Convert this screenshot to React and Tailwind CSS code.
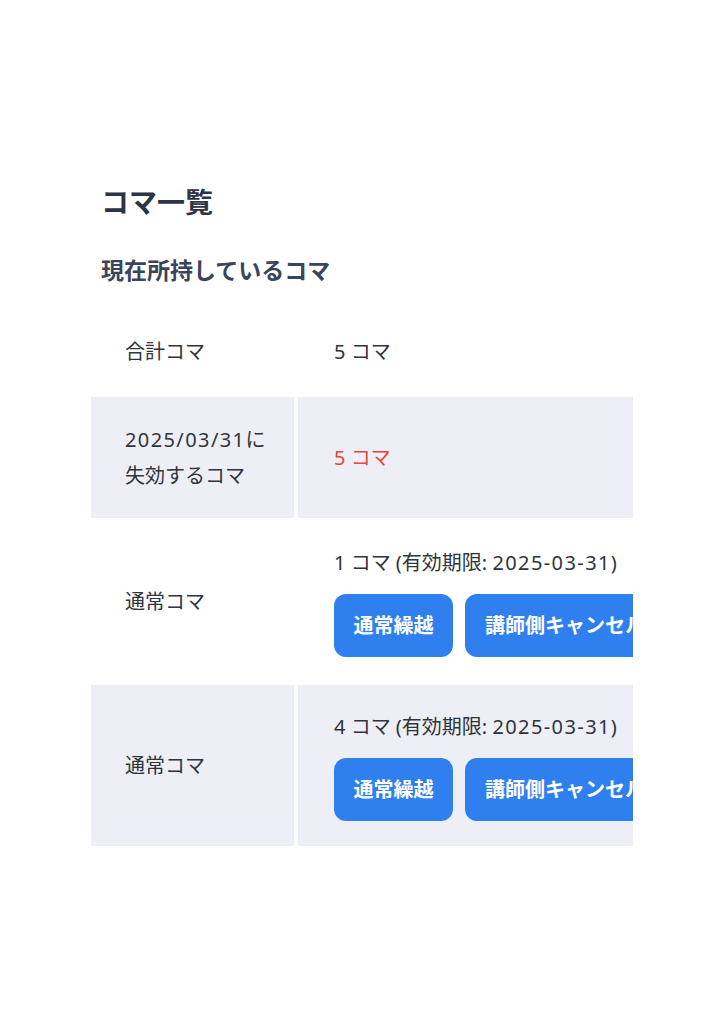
export default function App() {
  const font = { fontFamily: '"Noto Sans", "Noto Sans CJK JP", sans-serif' };
  const Num = ({ children }) => <span className="tracking-[1.4px]">{children}</span>;
  const Btns = () => (
    <div className="flex gap-[12px] mt-[13px] whitespace-nowrap">
      <button className="h-[63px] px-[19.5px] rounded-[12px] bg-[#2f7fef] text-white text-[20px] font-bold shrink-0">通常繰越</button>
      <button className="h-[63px] px-[20px] rounded-[12px] bg-[#2f7fef] text-white text-[20px] font-bold shrink-0">講師側キャンセル繰越</button>
    </div>
  );
  return (
    <div className="min-h-[1024px] bg-white text-[#30343c]" style={font}>
      <div className="pt-[182px] pl-[91px]">
        <h1 className="pl-[10px] text-[28px] font-bold text-[#2d3444] leading-[40px]">コマ一覧</h1>
        <h2 className="pl-[10px] mt-[32px] text-[23px] font-bold text-[#3a455c] leading-[32px]">現在所持しているコマ</h2>
        <div className="mt-[24px] w-[542px] overflow-hidden">
          <div className="grid grid-cols-[203px_1fr] gap-x-[4px] gap-y-[3px] w-[700px] text-[20px] leading-[36px]">
            <div className="pl-[34px] py-[24px] flex items-center">合計コマ</div>
            <div className="pl-[36px] py-[24px] flex items-center">5 コマ</div>

            <div className="bg-[#eeeff6] pl-[34px] pt-[25px] pb-[24px] flex flex-col justify-center">
              <span><Num>2025/03/31</Num>に</span>
              <span>失効するコマ</span>
            </div>
            <div className="bg-[#eeeff6] pl-[36px] pt-[25px] pb-[24px] flex items-center text-[#e8453c]">5 コマ</div>

            <div className="pl-[34px] py-[24px] flex items-center">通常コマ</div>
            <div className="pl-[36px] pt-[24px] pb-[25px] flex flex-col">
              <span>1 コマ (有効期限: <Num>2025-03-31</Num>)</span>
              <Btns />
            </div>

            <div className="bg-[#eeeff6] pl-[34px] py-[24px] flex items-center">通常コマ</div>
            <div className="bg-[#eeeff6] pl-[36px] pt-[24px] pb-[25px] flex flex-col">
              <span>4 コマ (有効期限: <Num>2025-03-31</Num>)</span>
              <Btns />
            </div>
          </div>
        </div>
      </div>
    </div>
  );
}
